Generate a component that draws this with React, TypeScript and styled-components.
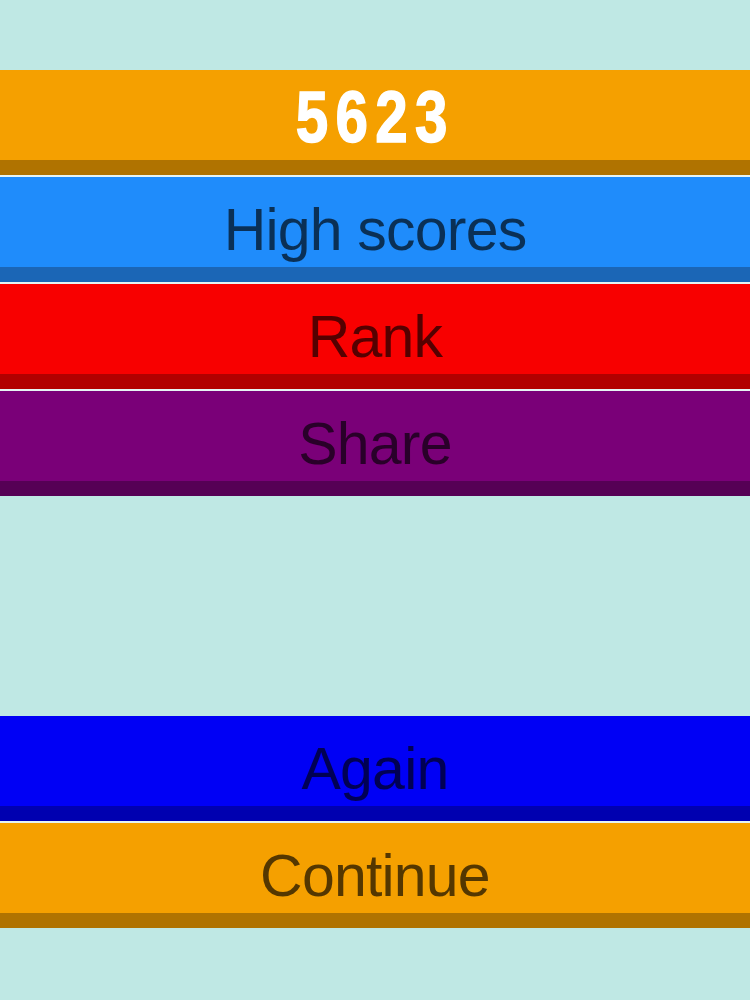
import React from 'react';
import styled, { createGlobalStyle } from 'styled-components';

const GlobalStyle = createGlobalStyle`
  html, body {
    margin: 0;
    padding: 0;
    background: #bfe8e4;
  }
  body {
    font-family: "Liberation Sans", Arial, sans-serif;
  }
`;

const Screen = styled.div`
  width: 750px;
  height: 1000px;
  padding-top: 70px;
  box-sizing: border-box;
  display: flex;
  flex-direction: column;
`;

const Stack = styled.div`
  display: flex;
  flex-direction: column;
  gap: 2px;
  background: #e6f4f3;
`;

const Bar = styled.div<{ $color: string; $shade: string }>`
  height: 90px;
  background: ${p => p.$color};
  border-bottom: 15px solid ${p => p.$shade};
  display: flex;
  align-items: center;
  justify-content: center;
`;

// narrow rounded digits, squeezed since no condensed face is installed
const Score = styled.div`
  font-family: "Liberation Sans", Arial, sans-serif;
  font-weight: 700;
  font-size: 73px;
  letter-spacing: 9px;
  color: #ffffff;
  -webkit-text-stroke: 1.5px #ffffff;
  line-height: 1;
  padding-top: 2px;
  transform: scaleX(0.8);
`;

const Label = styled.span`
  font-family: "Liberation Sans", Arial, sans-serif;
  font-size: 59px;
  letter-spacing: -0.8px;
  line-height: 1;
  color: rgba(0, 0, 0, 0.66);
  padding-top: 16px;
`;

const Spacer = styled.div`
  height: 220px;
`;

const menu = [
  { label: 'High scores', color: '#1f8cfb', shade: '#1b66b6' },
  { label: 'Rank', color: '#f80000', shade: '#b20000' },
  { label: 'Share', color: '#7a0078', shade: '#560055' },
];

const actions = [
  { label: 'Again', color: '#0000f5', shade: '#0000b0' },
  { label: 'Continue', color: '#f5a000', shade: '#b07300' },
];

const App: React.FC = () => {
  return (
    <>
      <GlobalStyle />
      <Screen>
        <Stack>
          <Bar $color="#f5a000" $shade="#b07300">
            <Score>5623</Score>
          </Bar>
          {menu.map(item => (
            <Bar key={item.label} $color={item.color} $shade={item.shade}>
              <Label>{item.label}</Label>
            </Bar>
          ))}
        </Stack>
        <Spacer />
        <Stack>
          {actions.map(item => (
            <Bar key={item.label} $color={item.color} $shade={item.shade}>
              <Label>{item.label}</Label>
            </Bar>
          ))}
        </Stack>
      </Screen>
    </>
  );
};

export default App;
